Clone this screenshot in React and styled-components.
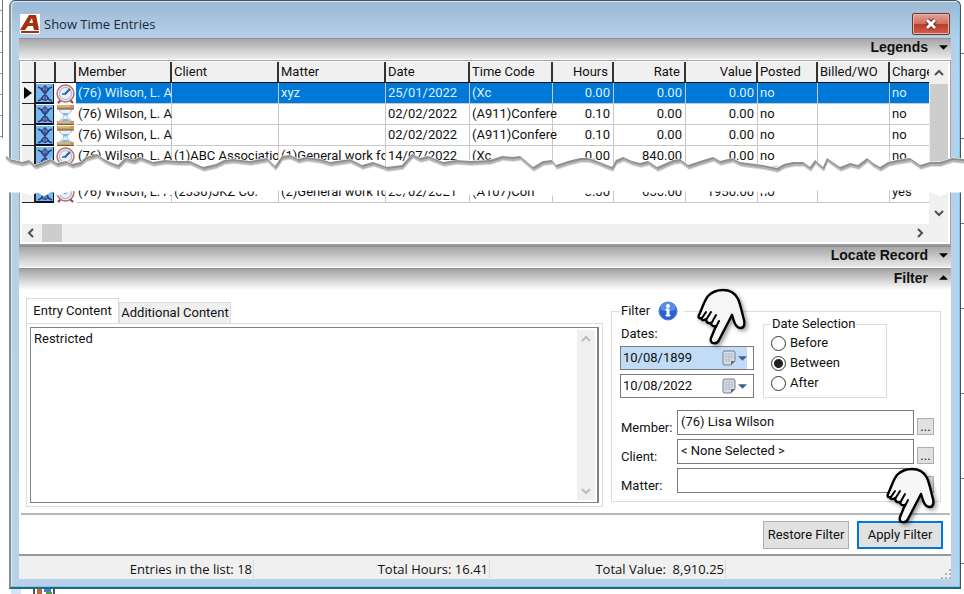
import { useState } from 'react';
import styled, { createGlobalStyle } from 'styled-components';

const COLUMNS = [
  { key: 'mark', label: '', width: 14 },
  { key: 'status', label: '', width: 20 },
  { key: 'type', label: '', width: 20 },
  { key: 'member', label: 'Member', width: 96, spill: true },
  { key: 'client', label: 'Client', width: 107 },
  { key: 'matter', label: 'Matter', width: 107 },
  { key: 'date', label: 'Date', width: 84 },
  { key: 'code', label: 'Time Code', width: 83, spill: true },
  { key: 'hours', label: 'Hours', width: 61, right: true },
  { key: 'rate', label: 'Rate', width: 72, right: true },
  { key: 'value', label: 'Value', width: 72, right: true },
  { key: 'posted', label: 'Posted', width: 60 },
  { key: 'billed', label: 'Billed/WO', width: 72 },
  { key: 'charge', label: 'Charge' },
];

const TEXT_COLUMNS = COLUMNS.slice(3);

const ENTRIES = [
  { id: 1, icon: 'clock', member: '(76) Wilson, L. A', matter: 'xyz', date: '25/01/2022', code: '(Xc', hours: '0.00', rate: '0.00', value: '0.00', posted: 'no', charge: 'no' },
  { id: 2, icon: 'glass', member: '(76) Wilson, L. A', date: '02/02/2022', code: '(A911)Confere', hours: '0.10', rate: '0.00', value: '0.00', posted: 'no', charge: 'no' },
  { id: 3, icon: 'glass', member: '(76) Wilson, L. A', date: '02/02/2022', code: '(A911)Confere', hours: '0.10', rate: '0.00', value: '0.00', posted: 'no', charge: 'no' },
  { id: 4, icon: 'clock', member: '(76) Wilson, L. A', client: '(1)ABC Association', matter: '(1)General work fo', date: '14/07/2022', code: '(Xc', hours: '0.00', rate: '840.00', value: '0.00', posted: 'no', charge: 'no' },
];

const LAST_ENTRY = { id: 18, icon: 'clock', member: '(76) Wilson, L. A', client: '(2330)JKZ Co.', matter: '(2)General work fo', date: '23/02/2021', code: '(A107)Con', hours: '3.00', rate: '650.00', value: '1950.00', posted: 'no', charge: 'yes' };

const TORN_EDGE =
  'L5 15L10 19L22 22L29 20L35 25L43 22L50 19L57 23L66 21L72 24L80 22L86 17L97 14L104 19L110 22L118 25L125 18L134 20L140 17L153 22L165 20L177 21L190 21L203 27L216 24L224 20L233 19L250 21L267 18L275 26L282 16L290 15L298 19L306 17L320 19L330 22L350 19L362 25L373 22L387 27L402 25L412 14L420 18L428 16L443 22L456 20L470 21L490 20L502 16L512 17L520 16L533 27L543 21L552 20L556 25L568 21L580 18L588 18L597 21L612 27L616 20L623 17L632 21L640 23L648 21L657 27L673 20L680 19L688 25L700 21L713 17L720 21L732 18L740 22L763 25L777 28L784 24L793 22L803 22L810 27L815 20L823 27L827 18L834 23L840 27L850 23L858 25L867 18L873 23L880 27L888 22L897 20L910 18L920 25L930 22L940 22L952 18L964 19';

const LOWER_EDGE =
  'V52H948L940 56L930 52L912 50H800L770 51L764 54L758 51H700L690 53L684 50H668L662 53L640 51L636 50H610L606 51L588 54L584 50H556L553 55L545 56L540 52L533 50H520L512 51L500 50H480L476 55L469 54L466 50H452L446 54L436 52L430 50H412L402 54L392 52L386 50H300L290 52L282 50H262L256 51H200L188 52L176 50L172 55L164 53L156 51H126L116 52L108 50H88L78 50L70 51L58 55L52 51L44 56L38 52L30 55L22 52H0Z';

const AppLogo = () => (
  <svg width='20' height='20' viewBox='0 0 20 20' aria-hidden='true'>
    <path d='M0 0h20v20H0z' fill='#fff' />
    <path d='M0 16 9 1h7l3 15h-5l-1-4H8l-3 4z' fill='#a62f0c' />
    <path d='m9 9 3-5 1 5z' fill='#fff' />
    <path d='M1 18h18' stroke='#a62f0c' strokeWidth='2' />
  </svg>
);

const StatusIcon = () => (
  <svg width='18' height='20' viewBox='0 0 18 20' aria-hidden='true'>
    <path d='M0 0h18v20H0z' fill='#74b9ee' />
    <path d='M2 3l4 2h6l4-2M2 17l4-2h6l4 2M5 5l8 10M13 5 5 15' fill='none' stroke='#2e3d7c' strokeWidth='1.4' />
    <circle cx='9' cy='5' r='2.5' fill='#8295d2' stroke='#2e3d7c' />
    <circle cx='9' cy='14' r='2.5' fill='#8295d2' stroke='#2e3d7c' />
    <path d='M9 1v16' stroke='#2e3d7c' />
    <path d='M0 19h18' stroke='#0b0f28' strokeWidth='2' />
    <path d='M17.5 0v20' stroke='#0b0f28' />
  </svg>
);

const ClockIcon = () => (
  <svg width='19' height='20' viewBox='0 0 19 20' aria-hidden='true'>
    <path d='M0 0h19v20H0z' fill='#fff' />
    <path d='M5 16l-3 3M14 16l3 3' stroke='#8f3f4d' strokeWidth='2' />
    <circle cx='9.5' cy='9.5' r='8.5' fill='#f3e3e6' stroke='#a8717c' strokeWidth='1.4' />
    <circle cx='9.5' cy='9.5' r='6' fill='#dff1fb' stroke='#c3a4ae' />
    <path d='M9 10l5-5' stroke='#2b5f86' strokeWidth='2' />
    <path d='M10 10H6' stroke='#2b5f86' strokeWidth='1.4' />
  </svg>
);

const HourglassIcon = () => (
  <svg width='19' height='20' viewBox='0 0 19 20' aria-hidden='true'>
    <path d='M0 0h19v20H0z' fill='#fff' />
    <path d='M3 4c0 4 5 4 5 7s-5 3-5 6h13c0-3-5-3-5-6s5-3 5-7z' fill='#eaf3fb' stroke='#a5bdd6' />
    <path d='M6 8h7l-3.500 3zM5 16c2-3 7-3 9 0z' fill='#7fb2e8' />
    <path d='M1 0h17v4H1zM1 16h17v4H1z' fill='#c79a60' />
    <path d='M1 4h17M1 19.500h17' stroke='#80592b' />
    <path d='M2 1h12M2 17h12' stroke='#eccf9c' />
  </svg>
);

const CalendarIcon = () => (
  <svg width='14' height='16' viewBox='0 0 14 16' aria-hidden='true'>
    <path d='M2 1h10l1 1v9l-4 4H2l-1-1V2z' fill='#d6dbe4' stroke='#7b7e88' />
    <path d='M3 4h8M3 7h8M3 10h6M4 3v9M7 3v9M10 3v6' stroke='#b3bfd3' />
    <path d='M9 15v-4h4z' fill='#666a74' />
  </svg>
);

const Triangle = ({ up, color = '#000' }) => (
  <svg width='9' height='5' viewBox='0 0 10 5' aria-hidden='true'>
    <path d={up ? 'M0 5 5 0l5 5z' : 'M0 0h10L5 5z'} fill={color} />
  </svg>
);

const CHEVRONS = { up: 'M2 8l4-4 4 4', down: 'M2 4l4 4 4-4', left: 'M8 2 4 6l4 4', right: 'M4 2l4 4-4 4' };

const Chevron = ({ to, color = '#505050' }) => (
  <svg width='12' height='12' viewBox='0 0 12 12' aria-hidden='true'>
    <path d={CHEVRONS[to]} fill='none' stroke={color} strokeWidth='2' />
  </svg>
);

const Hand = () => (
  <svg width='52' height='60' viewBox='0 0 52 60' aria-hidden='true'>
    <path
      d='M2 27C5 21 7 13 11 8c4-4 9-6 15-6 7 0 12 3 15 9 3 7 4 14 6 21 1 4 0 8-3 8-6 0-7-7-9-13L22 52c-2 5-10 4-8-2l5-12c-3 1-5-1-5-3-3 1-5-1-5-4-2 2-5 1-5-1-2 1-3-1-2-3z'
      fill='#f6f6f6'
      stroke='#000'
      strokeWidth='2.4'
      strokeLinejoin='round'
    />
    <path d='M5 30l4-6M9 32l5-8M14 36l5-9M19 39l3-6' stroke='#000' strokeWidth='2' strokeLinecap='round' />
  </svg>
);

const InfoIcon = () => (
  <svg width='20' height='20' viewBox='0 0 20 20' role='img' aria-label='Information'>
    <circle cx='10' cy='10' r='9' fill='#2a62d4' stroke='#4a7ade' />
    <path d='M2 8a8 7 0 0 1 16 0c-5 3-11 3-16 0z' fill='#5c8cea' />
    <circle cx='10' cy='5' r='2' fill='#fff' />
    <path d='M8 8h3v6h1v1H8v-1h1V9H8z' fill='#fff' stroke='#fff' />
  </svg>
);

const EntryRow = ({ entry, selected }) => (
  <Row $selected={selected}>
    <MarkCell>
      {selected && (
        <svg width='8' height='12' viewBox='0 0 8 12' aria-label='Current row'>
          <path d='M0 0l8 6-8 6z' />
        </svg>
      )}
    </MarkCell>
    <IconCell>
      <StatusIcon />
    </IconCell>
    <IconCell>{entry.icon === 'clock' ? <ClockIcon /> : <HourglassIcon />}</IconCell>
    {TEXT_COLUMNS.map((column) => (
      <Cell key={column.key} $right={column.right} $spill={column.spill}>
        {entry[column.key]}
      </Cell>
    ))}
  </Row>
);

const DateField = ({ label, initial, active }) => {
  const [value, setValue] = useState(initial);

  return (
    <DateBox $active={active}>
      <input type='text' aria-label={label} value={value} onChange={(e) => setValue(e.target.value)} />
      <button type='button' aria-label={`Pick ${label}`}>
        <CalendarIcon />
        <Triangle color='#3f5f92' />
      </button>
    </DateBox>
  );
};

const LookupField = ({ id, label, initial }) => {
  const [value, setValue] = useState(initial);

  return (
    <Lookup>
      <label htmlFor={id}>{label}:</label>
      <input id={id} type='text' value={value} onChange={(e) => setValue(e.target.value)} />
      <button type='button' aria-label={`Choose ${label}`}>
        ...
      </button>
    </Lookup>
  );
};

const App = () => {
  const [content, setContent] = useState('Restricted');
  const [mode, setMode] = useState('Between');

  return (
    <Page>
      <GlobalStyle />
      <Desktop>
        <LeftEdge />
        <Window>
          <TitleBar>
            <AppLogo />
            <h1>Show Time Entries</h1>
            <CloseButton type='button' aria-label='Close'>
              <svg width='14' height='12' viewBox='0 0 14 12' aria-hidden='true'>
                <path d='M3 2l8 8M11 2l-8 8' stroke='#6b2a22' strokeWidth='5' />
                <path d='M3 2l8 8M11 2l-8 8' stroke='#fff' strokeWidth='3' />
              </svg>
            </CloseButton>
          </TitleBar>
          <Client>
            <SectionBar type='button'>
              Legends <Triangle />
            </SectionBar>
            <GridFrame>
              <GridBody>
                <TableClip>
                  <Table>
                    <colgroup>
                      {COLUMNS.map((column) => (
                        <col key={column.key} width={column.width} />
                      ))}
                    </colgroup>
                    <thead>
                      <tr>
                        {COLUMNS.map((column) => (
                          <HeadCell key={column.key} $right={column.right}>
                            {column.label}
                          </HeadCell>
                        ))}
                      </tr>
                    </thead>
                    <tbody>
                      {ENTRIES.map((entry, i) => (
                        <EntryRow key={entry.id} entry={entry} selected={i === 0} />
                      ))}
                      <SkippedRow>
                        <td colSpan={COLUMNS.length} />
                      </SkippedRow>
                      <EntryRow entry={LAST_ENTRY} />
                    </tbody>
                  </Table>
                </TableClip>
                <VerticalScroll>
                  <Chevron to='up' />
                  <Thumb />
                  <Chevron to='down' />
                </VerticalScroll>
              </GridBody>
              <HorizontalScroll>
                <Chevron to='left' />
                <Thumb $horizontal />
                <Chevron to='right' />
              </HorizontalScroll>
            </GridFrame>
            <SectionBar type='button'>
              Locate Record <Triangle />
            </SectionBar>
            <SectionBar type='button' $open>
              Filter <Triangle up />
            </SectionBar>
            <Panel>
              <Tabs>
                <TabList role='tablist'>
                  <Tab type='button' role='tab' aria-selected='true' $current>
                    Entry Content
                  </Tab>
                  <Tab type='button' role='tab' aria-selected='false'>
                    Additional Content
                  </Tab>
                </TabList>
                <TabBody>
                  <Editor>
                    <textarea aria-label='Entry Content' value={content} onChange={(e) => setContent(e.target.value)} />
                    <EditorScroll>
                      <Chevron to='up' color='#bdbdbd' />
                      <Chevron to='down' color='#bdbdbd' />
                    </EditorScroll>
                  </Editor>
                </TabBody>
              </Tabs>
              <FilterGroup>
                <legend>
                  Filter
                  <InfoIcon />
                </legend>
                <FilterTop>
                  <Dates>
                    <span>Dates:</span>
                    <DateField label='start date' initial='10/08/1899' active />
                    <DateField label='end date' initial='10/08/2022' />
                    <DateHand>
                      <Hand />
                    </DateHand>
                  </Dates>
                  <SelectionGroup>
                    <legend>Date Selection</legend>
                    {['Before', 'Between', 'After'].map((name) => (
                      <Radio key={name}>
                        <input type='radio' name='mode' checked={mode === name} onChange={() => setMode(name)} />
                        {name}
                      </Radio>
                    ))}
                  </SelectionGroup>
                </FilterTop>
                <Lookups>
                  <LookupField id='member' label='Member' initial='(76) Lisa Wilson' />
                  <LookupField id='client' label='Client' initial='< None Selected >' />
                  <LookupField id='matter' label='Matter' initial='' />
                </Lookups>
              </FilterGroup>
            </Panel>
            <Actions>
              <ActionButton type='button'>Restore Filter</ActionButton>
              <ActionButton type='button' $primary>
                Apply Filter
              </ActionButton>
              <ApplyHand>
                <Hand />
              </ApplyHand>
            </Actions>
            <StatusBar>
              <span>Entries in the list: 18</span>
              <span>Total Hours: 16.41</span>
              <span>Total Value:&nbsp; 8,910.25</span>
              <svg width='10' height='10' viewBox='0 0 10 10' aria-hidden='true'>
                <path d='M8 0h2v2H8zM8 4h2v2H8zM8 8h2v2H8zM4 4h2v2H4zM4 8h2v2H4zM0 8h2v2H0z' fill='#b5b5b5' />
              </svg>
            </StatusBar>
          </Client>
        </Window>
        <RightEdge />
      </Desktop>
      <BottomEdge>
        <svg width='60' height='6' viewBox='0 0 60 6' aria-hidden='true'>
          <path d='M0 0h10v6H0z' fill='#d7e4f2' />
          <path d='M22 0h2v6h-2zM42 0h2v6h-2z' fill='#555' />
          <path d='M26 0h5v6h-5z' fill='#b9693c' />
          <path d='M33 0h7v3h-7z' fill='#4b7fc4' />
          <path d='M35 3h6v3h-6z' fill='#4d9a45' />
        </svg>
      </BottomEdge>
      <Tear viewBox='0 0 964 60' preserveAspectRatio='none' aria-hidden='true'>
        <path d={`M0 14${TORN_EDGE}${LOWER_EDGE}`} fill='#fff' stroke='#fff' />
        <path d={`M0 16${TORN_EDGE}V40H0Z`} fill='#909090' />
        <path d={`M0 16${TORN_EDGE}V40H0Z`} fill='#b4b4b4' transform='translate(1 2)' />
        <path d={`M0 16${TORN_EDGE}V40H0Z`} fill='#e0e0e0' transform='translate(1 4)' />
        <path d={`M0 0${TORN_EDGE}V40H0Z`} fill='#fff' transform='translate(1 5)' />
        <path d='M0 0h6v60H0z' fill='#fff' />
      </Tear>
    </Page>
  );
};

export default App;

const GlobalStyle = createGlobalStyle`
  * {
    box-sizing: border-box;
  }

  body {
    margin: 0;
    background: #fff;
    color: #111;
    font: 13px/16px Roboto, 'Liberation Sans', sans-serif;
  }

  button,
  input,
  textarea {
    margin: 0;
    font: inherit;
    color: inherit;
  }

  svg {
    display: block;
    flex: none;
  }
`;

const Page = styled.div`
  position: relative;
  overflow: hidden;
`;

const Desktop = styled.div`
  display: flex;
`;

const LeftEdge = styled.div`
  width: 9px;
  height: 138px;
  background:
    linear-gradient(#777, #777) 2px 0 / 1px 100% no-repeat,
    repeating-linear-gradient(#fff 0 10px, #999 10px 11px, #fff 11px 21px) 0 0 / 2px 100% no-repeat;
`;

const RightEdge = styled.div`
  width: 3px;
  background: repeating-linear-gradient(#fff 0 53px, #777 53px 54px, #fff 54px 85px);
`;

const BottomEdge = styled.div`
  height: 6px;
  padding-left: 11px;
`;

const Window = styled.div`
  flex: 1;
  min-width: 0;
  padding: 0 9px 8px 8px;
  border: 1px solid #42515b;
  border-left: 2px solid #858b91;
  border-bottom: 2px solid #2f6478;
  border-radius: 6px 6px 0 0;
  background: linear-gradient(#9ab9d4, #b7d0e9 38px, #b9d1ea);
  box-shadow: inset -1px -1px #62d3f2, inset 1px 1px #d9e8f5;
`;

const TitleBar = styled.header`
  display: flex;
  align-items: center;
  height: 37px;
  padding: 8px 1px 0 1px;

  h1 {
    flex: 1;
    margin: 0 0 0 4px;
    font: 13px/20px 'Open Sans', sans-serif;
    color: #1c2a38;
  }
`;

const CloseButton = styled.button`
  display: flex;
  align-items: center;
  justify-content: center;
  width: 38px;
  height: 22px;
  border: 1px solid #6d3433;
  border-radius: 2px;
  background: linear-gradient(#e2a297, #d0705f 48%, #bc3a26 50%, #d0604c);
  box-shadow: inset 0 0 0 1px #e9b3aa;
`;

const Client = styled.main`
  background: #fff;
`;

const SectionBar = styled.button`
  display: flex;
  align-items: center;
  justify-content: flex-end;
  gap: 11px;
  width: 100%;
  height: 22px;
  padding: 0 3px 4px 0;
  border: 0;
  border-top: 1px solid #8f8f8f;
  border-bottom: ${({ $open }) => ($open ? '0' : '1px solid #fff')};
  background: linear-gradient(${({ $open }) => ($open ? '#a3a3a3, #ffffff' : '#a8a6a8, #ececec')});
  font: bold 14px/16px 'Liberation Sans', sans-serif;
`;

const GridFrame = styled.section`
  padding: 1px 2px 2px 2px;
  border: 1px solid #a5a5a5;
  border-bottom: 2px solid #999;
`;

const GridBody = styled.div`
  display: flex;
  height: 162px;
`;

const TableClip = styled.div`
  flex: 1;
  min-width: 0;
  overflow: hidden;
`;

const Table = styled.table`
  width: 100%;
  table-layout: fixed;
  border-collapse: separate;
  border-spacing: 0;

  th,
  td {
    height: 21px;
    padding: 0 0 0 2px;
    overflow: hidden;
    white-space: nowrap;
  }
`;

const HeadCell = styled.th`
  border-right: 2px solid #333;
  border-bottom: 1px solid #111;
  background: #f0f0f0;
  font-weight: 400;
  text-align: ${({ $right }) => ($right ? 'right' : 'left')};

  && {
    padding-right: ${({ $right }) => ($right ? '4px' : '0')};
  }

  &:last-child {
    border-right: 0;
  }
`;

const Row = styled.tr`
  background: ${({ $selected }) => ($selected ? '#0078d7' : '#fff')};
  color: ${({ $selected }) => ($selected ? '#d9f1ff' : '#111')};
`;

const Cell = styled.td`
  border-right: 1px solid #c8c8c8;
  border-bottom: 1px solid #c8c8c8;
  text-align: ${({ $right }) => ($right ? 'right' : 'left')};

  && {
    padding-right: ${({ $right }) => ($right ? '3px' : '0')};
    overflow: ${({ $spill }) => ($spill ? 'visible' : 'hidden')};
  }

  &:last-child {
    border-right: 0;
  }
`;

const MarkCell = styled.td`
  border-right: 2px solid #222;
  border-bottom: 1px solid #222;
  background: #f0f0f0;

  svg {
    fill: #000;
  }
`;

const IconCell = styled.td`
  && {
    padding: 0;
  }

  background: #fff;
`;

const SkippedRow = styled.tr`
  && td {
    height: 15px;
  }
`;

const VerticalScroll = styled.div`
  display: flex;
  flex-direction: column;
  align-items: center;
  gap: 5px;
  width: 19px;
  padding: 5px 0;
  background: #f0f0f0;
`;

const HorizontalScroll = styled.div`
  display: flex;
  align-items: center;
  gap: 5px;
  height: 18px;
  padding: 0 22px 0 3px;
  background: #f0f0f0;

  svg:last-child {
    margin-left: auto;
  }
`;

const Thumb = styled.div`
  width: ${({ $horizontal }) => ($horizontal ? '20px' : '18px')};
  height: ${({ $horizontal }) => ($horizontal ? '18px' : '90px')};
  margin-bottom: ${({ $horizontal }) => ($horizontal ? '0' : 'auto')};
  background: #cdcdcd;
`;

const Panel = styled.section`
  display: flex;
  align-items: flex-start;
  gap: 8px;
  padding: 8px 10px 6px 7px;
`;

const Tabs = styled.div`
  flex: 1;
  min-width: 0;
`;

const TabList = styled.div`
  display: flex;
  align-items: flex-end;
`;

const Tab = styled.button`
  width: ${({ $current }) => ($current ? '93px' : '112px')};
  height: ${({ $current }) => ($current ? '25px' : '21px')};
  padding: 0;
  border: 1px solid #dcdcdc;
  border-bottom: 0;
  background: ${({ $current }) => ($current ? '#fff' : '#f0f0f0')};
`;

const TabBody = styled.div`
  padding: 3px;
  border: 1px solid #dcdcdc;
`;

const Editor = styled.div`
  display: flex;
  height: 176px;
  border: 1px solid #828282;
  border-right-width: 2px;

  textarea {
    flex: 1;
    min-width: 0;
    padding: 3px;
    border: 0;
    outline: none;
    resize: none;
  }
`;

const EditorScroll = styled.div`
  display: flex;
  flex-direction: column;
  justify-content: space-between;
  align-items: center;
  width: 18px;
  margin: 2px;
  padding: 3px 0;
  background: #f0f0f0;
`;

const FilterGroup = styled.fieldset`
  width: 330px;
  margin: 7px 0 0;
  padding: 0 6px 8px 8px;
  border: 1px solid #dcdcdc;

  > legend {
    display: flex;
    align-items: center;
    gap: 8px;
    height: 12px;
    padding: 0 6px 0 1px;
  }
`;

const FilterTop = styled.div`
  display: flex;
  align-items: flex-end;
  gap: 9px;
`;

const Dates = styled.div`
  position: relative;
  display: flex;
  flex-direction: column;
  gap: 4px;
  width: 134px;

  span {
    padding-left: 1px;
  }
`;

const DateBox = styled.div`
  display: flex;
  height: 24px;
  border: 1px solid #7a7a7a;
  background: ${({ $active }) => ($active ? 'linear-gradient(to right, #c2dcf8 126px, #fff 126px)' : '#fff')};

  input {
    flex: 1;
    min-width: 0;
    padding: 0 2px;
    border: 0;
    background: none;
    outline: none;
  }

  button {
    display: flex;
    align-items: center;
    gap: 2px;
    padding: 0 6px 0 0;
    border: 0;
    background: none;
  }
`;

const DateHand = styled.div`
  position: absolute;
  bottom: 50px;
  left: 77px;
  filter: drop-shadow(2px 2px 2px #0006);
`;

const SelectionGroup = styled.fieldset`
  width: 124px;
  margin: 0;
  padding: 2px 7px 4px;
  border: 1px solid #dcdcdc;

  legend {
    height: 14px;
    padding: 0 1px;
    line-height: 14px;
  }
`;

const Radio = styled.label`
  display: flex;
  align-items: center;
  gap: 4px;
  height: 20px;

  input {
    appearance: none;
    width: 15px;
    height: 15px;
    border: 1px solid #333;
    border-radius: 50%;
    background: #fff;

    &:checked {
      background: radial-gradient(#222 4px, #fff 5px);
    }
  }
`;

const Lookups = styled.div`
  display: flex;
  flex-direction: column;
  gap: 4px;
  padding-top: 12px;
`;

const Lookup = styled.div`
  display: flex;
  align-items: flex-end;

  label {
    width: 57px;
    padding-left: 1px;
    line-height: 14px;
  }

  input {
    flex: 1;
    min-width: 0;
    height: 25px;
    padding: 0 3px 2px;
    border: 1px solid #7a7a7a;
    outline: none;
  }

  button {
    width: 17px;
    height: 17px;
    margin-left: 3px;
    padding: 0;
    border: 1px solid #adadad;
    background: #e1e1e1;
    line-height: 14px;
  }
`;

const Actions = styled.div`
  position: relative;
  display: flex;
  align-items: center;
  justify-content: flex-end;
  gap: 8px;
  height: 41px;
  margin: 0 1px 0 2px;
  padding-right: 7px;
  border-top: 2px solid #b8b8b8;
`;

const ActionButton = styled.button`
  width: 86px;
  height: 28px;
  padding: 0;
  border: ${({ $primary }) => ($primary ? '2px solid #0078d7' : '1px solid #adadad')};
  background: #e1e1e1;
`;

const ApplyHand = styled.div`
  position: absolute;
  bottom: 27px;
  right: 12px;
  filter: drop-shadow(2px 2px 2px #0006);
`;

const StatusBar = styled.footer`
  display: grid;
  grid-template-columns: 235px 236px 236px 1fr;
  align-items: center;
  height: 25px;
  padding-top: 2px;
  border-top: 2px solid #999;
  background: #f0f0f0;
  font: 13px/18px 'Open Sans', sans-serif;

  span {
    padding-right: 1px;
    border-right: 1px solid #dcdcdc;
    text-align: right;
  }

  svg {
    justify-self: end;
    align-self: end;
  }
`;

const Tear = styled.svg`
  position: absolute;
  top: 140px;
  left: 0;
  width: 100%;
  height: 60px;
`;
